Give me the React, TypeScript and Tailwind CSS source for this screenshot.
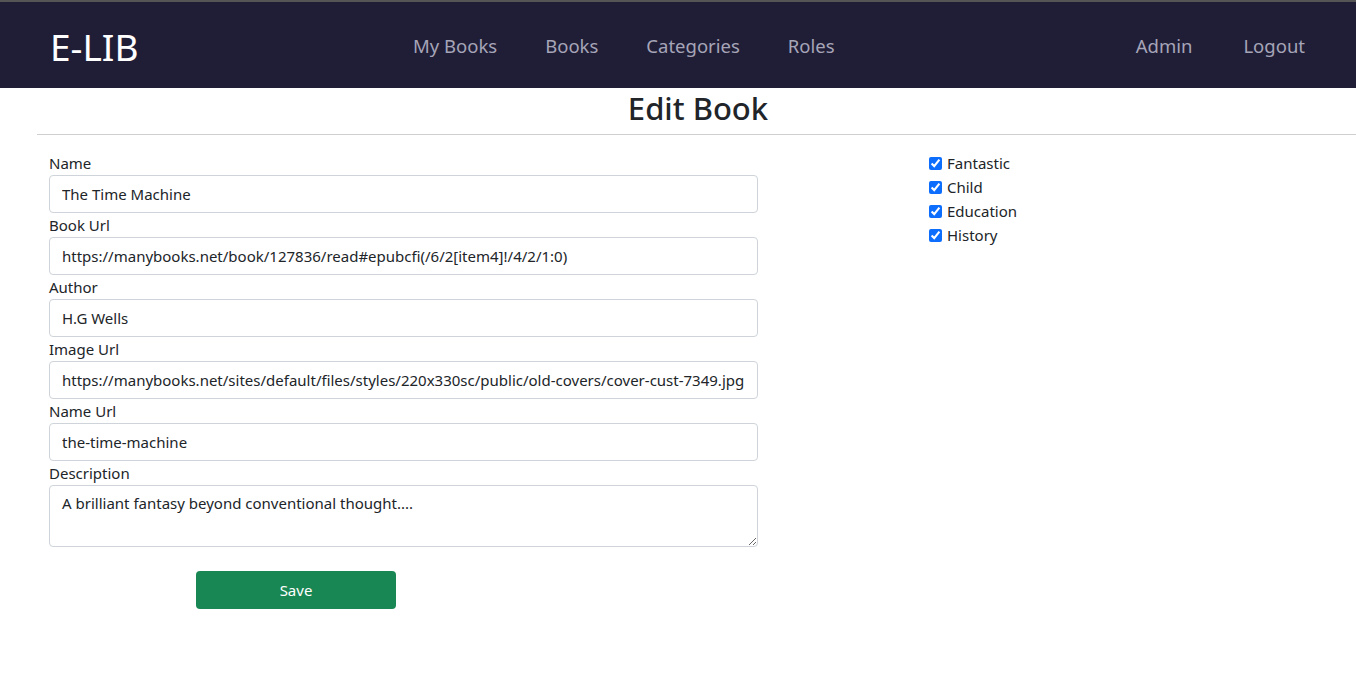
import React from "react";

const fields = [
  { label: "Name", value: "The Time Machine" },
  { label: "Book Url", value: "https://manybooks.net/book/127836/read#epubcfi(/6/2[item4]!/4/2/1:0)" },
  { label: "Author", value: "H.G Wells" },
  { label: "Image Url", value: "https://manybooks.net/sites/default/files/styles/220x330sc/public/old-covers/cover-cust-7349.jpg" },
  { label: "Name Url", value: "the-time-machine" },
];

const cats = ["Fantastic", "Child", "Education", "History"];

export default function App() {
  return (
    <div className="min-h-[677px] bg-white text-[#212529]" style={{ fontFamily: '"Noto Sans", "Open Sans", sans-serif' }}>
      <div className="h-[2px] bg-[#555]" />
      <nav className="h-[86px] bg-[#201e37] flex items-center pt-[2px] pl-[50px] pr-[51px]">
        <div className="text-white text-[37px] leading-none w-[363px]">E-LIB</div>
        <div className="flex gap-[48px] text-[18.5px] text-[#a6a5b8]">
          <span>My Books</span>
          <span>Books</span>
          <span>Categories</span>
          <span>Roles</span>
        </div>
        <div className="ml-auto flex gap-[51px] text-[18.5px] text-[#a6a5b8]">
          <span>Admin</span>
          <span>Logout</span>
        </div>
      </nav>
      <h2 className="text-center text-[31px] font-medium leading-[40px] pl-[40px]">Edit Book</h2>
      <hr className="mt-[6px] ml-[37px] border-t border-[#cfcfcf] mb-[16px]" />
      <div className="flex pl-[49px]">
        <div className="w-[709px]">
          {fields.map((f) => (
            <div key={f.label}>
              <div className="text-[15px] leading-[24px]">{f.label}</div>
              <input
                readOnly
                value={f.value}
                className="w-full h-[38px] border border-[#ced4da] rounded-[4px] px-[12px] text-[15px] outline-none"
              />
            </div>
          ))}
          <div className="text-[15px] leading-[24px]">Description</div>
          <textarea
            readOnly
            value="A brilliant fantasy beyond conventional thought...."
            className="block w-full h-[62px] border border-[#ced4da] rounded-[4px] px-[12px] py-[6px] text-[15px] outline-none"
          />
          <button className="mt-[24px] ml-[147px] w-[200px] h-[38px] bg-[#198754] text-white rounded-[4px] text-[15px]">
            Save
          </button>
        </div>
        <div className="ml-[171px]">
          {cats.map((c) => (
            <label key={c} className="flex items-center text-[15px] leading-[24px] gap-[5px]">
              <input type="checkbox" defaultChecked className="w-[13px] h-[13px] accent-[#0d6efd]" />
              {c}
            </label>
          ))}
        </div>
      </div>
    </div>
  );
}
